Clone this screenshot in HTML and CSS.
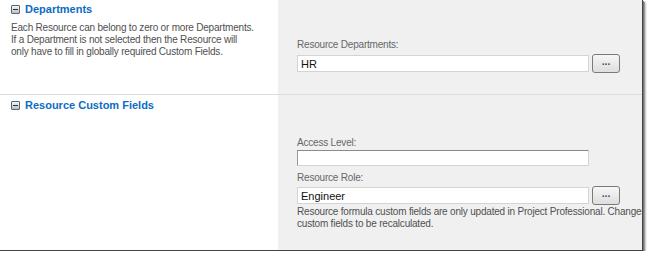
FILE: index.html
```html
<!DOCTYPE html>
<html lang="en">
<head>
    <meta charset="UTF-8">
    <title>Resource Settings</title>
    <link rel="stylesheet" href="styles.css">
</head>
<body>
    <div class="frame">
        <div class="section">
            <div class="section-info">
                <div class="section-title">
                    <span class="toggle"></span>
                    <span>Departments</span>
                </div>
                <p class="description">Each Resource can belong to zero or more Departments. If a Department is not selected then the Resource will only have to fill in globally required Custom Fields.</p>
            </div>
            <div class="section-fields dept-fields">
                <div class="field-label">Resource Departments:</div>
                <div class="field-row">
                    <div class="text-box">HR</div>
                    <button class="picker-btn">...</button>
                </div>
            </div>
        </div>
        <div class="section last">
            <div class="section-info">
                <div class="section-title">
                    <span class="toggle"></span>
                    <span>Resource Custom Fields</span>
                </div>
            </div>
            <div class="section-fields custom-fields">
                <div class="field-label">Access Level:</div>
                <div class="field-row plain">
                    <div class="text-box inset"></div>
                </div>
                <div class="field-label">Resource Role:</div>
                <div class="field-row">
                    <div class="text-box">Engineer</div>
                    <button class="picker-btn">...</button>
                </div>
                <p class="note">Resource formula custom fields are only updated in Project Professional. Changes to these values require<br>custom fields to be recalculated.</p>
            </div>
        </div>
    </div>
</body>
</html>
```

FILE: styles.css
```css
body, html {
    margin: 0;
    padding: 0;
    background: #fff;
    font-family: "Liberation Sans", Arial, sans-serif;
    font-size: 10px;
    letter-spacing: -0.2px;
    color: #4c4c4c;
}

.frame {
    width: 642px;
    height: 250px;
    overflow: hidden;
    background: #fff;
    border-right: 1px solid #444;
    border-bottom: 1px solid #444;
    box-shadow: 1px 1px 0 #777, 2px 2px 1px #999, 3px 3px 2px #ccc;
}

.section {
    display: grid;
    grid-template-columns: 278px 1fr;
    border-bottom: 1px solid #dcdcdc;
    height: 94px;
}

.section.last {
    border-bottom: none;
    height: 156px;
}

.section-info {
    padding: 2px 0 0 11px;
}

.section-title {
    display: flex;
    align-items: center;
    gap: 5px;
    font-weight: bold;
    font-size: 11px;
    letter-spacing: 0;
    color: #0b6cc4;
    height: 14px;
}

.section.last .section-title {
    margin-top: 1px;
}

.toggle {
    position: relative;
    width: 7px;
    height: 7px;
    border: 1px solid #5d6670;
    background: linear-gradient(#f4f6f8, #b9c1c9);
    border-radius: 1px;
}

.toggle::after {
    content: "";
    position: absolute;
    left: 1px;
    top: 3px;
    width: 5px;
    height: 1px;
    background: #2c3540;
}

.description {
    margin: 6px 0 0;
    width: 244px;
    line-height: 12px;
    color: #505050;
}

.section-fields {
    background: #f0f0f0;
    padding: 0 0 0 19px;
    white-space: nowrap;
}

.dept-fields {
    padding-top: 38px;
}

.dept-fields .field-label {
    margin-bottom: 3px;
}

.custom-fields {
    padding-top: 41px;
}

.field-label {
    color: #676767;
    line-height: 13px;
    margin-bottom: 1px;
}

.field-row {
    display: flex;
    align-items: center;
    gap: 3px;
    height: 19px;
}

.field-row.plain {
    height: 16px;
    margin-bottom: 5px;
}

.custom-fields .field-row.plain + .field-label {
    margin-bottom: 2px;
}

.text-box {
    box-sizing: border-box;
    width: 292px;
    height: 17px;
    padding: 1px 3px;
    background: #fff;
    border: 1px solid #d4d4d4;
    color: #111;
    font-size: 11px;
    letter-spacing: 0;
    line-height: 14px;
}

.text-box.inset {
    height: 16px;
    border-top-color: #8a8a8a;
    border-left-color: #9a9a9a;
}

.picker-btn {
    box-sizing: border-box;
    width: 28px;
    height: 19px;
    padding: 0 0 4px;
    border: 1px solid #7a7a7a;
    border-radius: 3px;
    background: linear-gradient(#f6f6f6, #dedede);
    color: #3a4a7a;
    font-family: "Liberation Sans", Arial, sans-serif;
    font-size: 10px;
    font-weight: bold;
    line-height: 10px;
}

.note {
    margin: 1px 0 0;
    line-height: 12px;
    color: #505050;
}
```
